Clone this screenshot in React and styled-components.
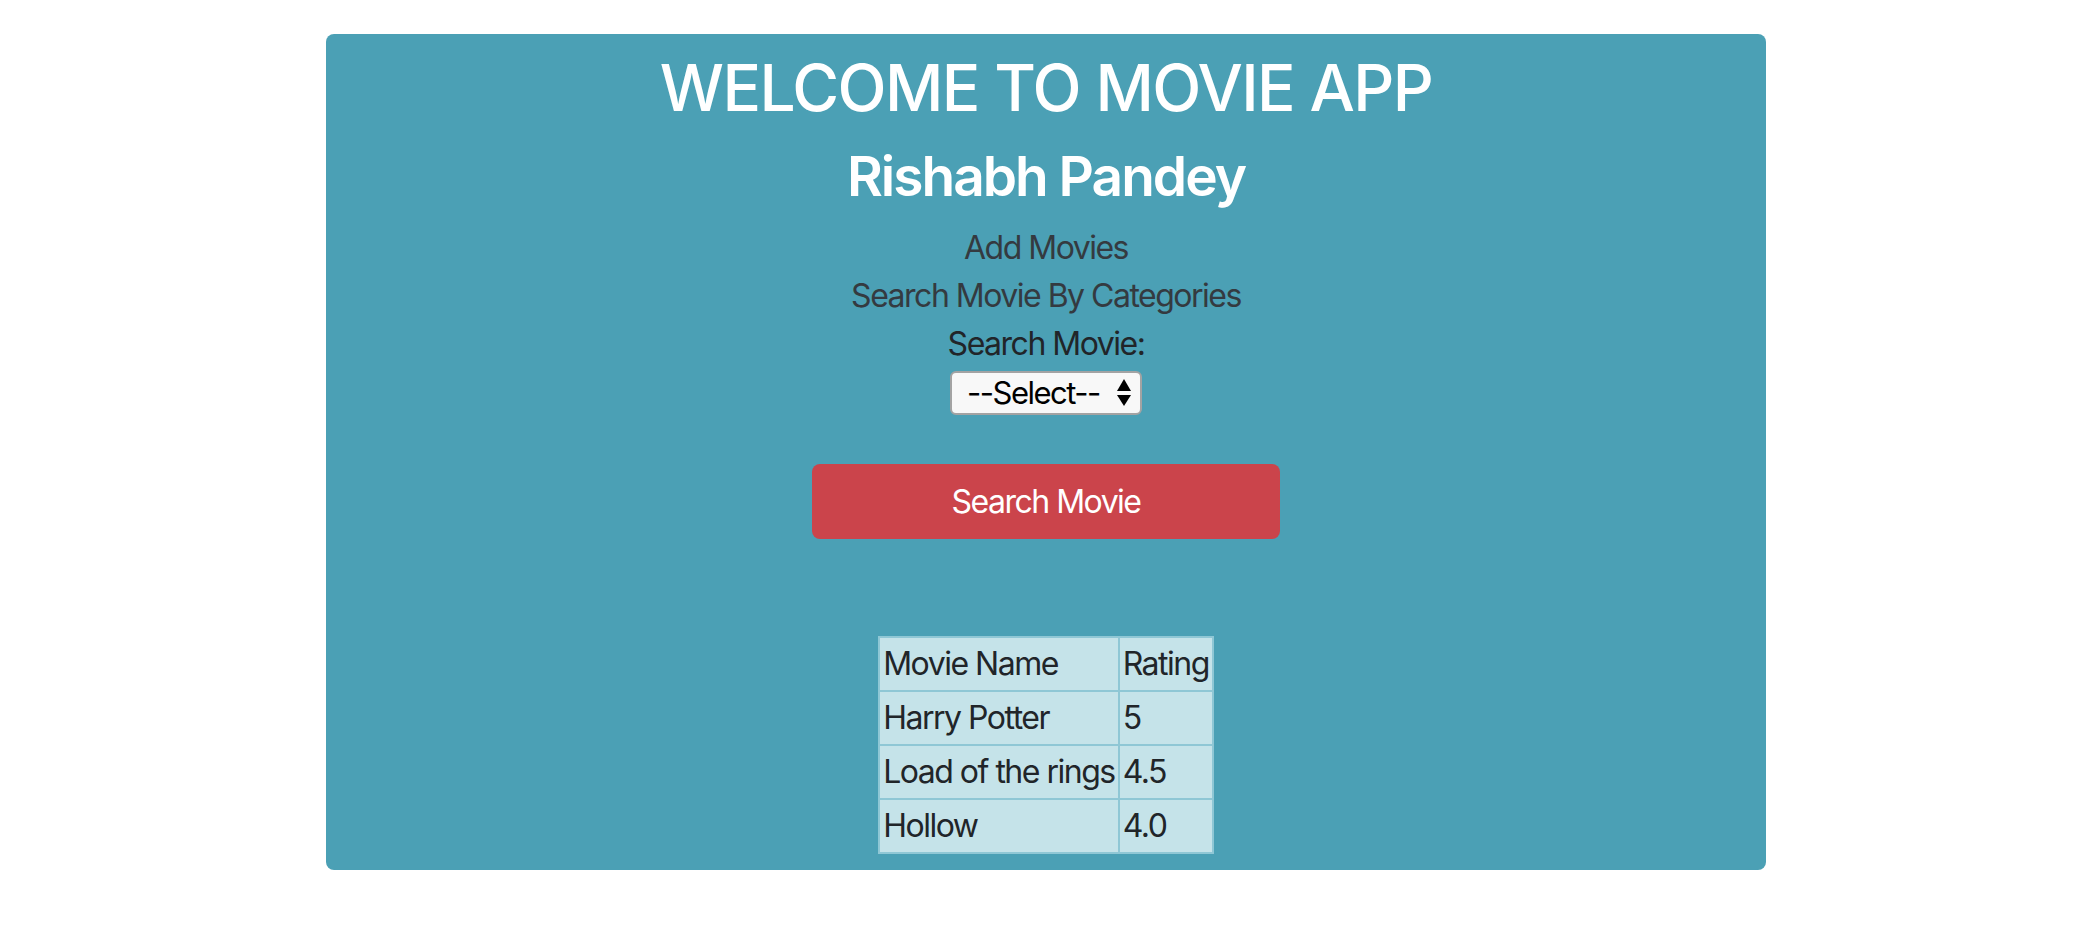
import React from 'react'
import styled, { createGlobalStyle } from 'styled-components'

const GlobalStyle = createGlobalStyle`
  body {
    margin: 0;
    background: #fff;
    font-family: Inter, 'Noto Sans', sans-serif;
    font-size: 32px;
    line-height: 1.5;
    letter-spacing: -1.5px;
    color: #212529;
  }
`

const Page = styled.div`
  padding: 34px 314px 0 326px;
`

const Card = styled.div`
  display: flex;
  flex-direction: column;
  align-items: center;
  background: #4ba0b5;
  border-radius: 8px;
  padding: 16px 0 16px;
  width: 1440px;
  box-sizing: border-box;
`

const Title = styled.h2`
  margin: 0 0 16px;
  font-size: 64px;
  font-weight: 500;
  line-height: 1.2;
  letter-spacing: -1.6px;
  color: #fff;
`

const Name = styled.h3`
  margin: 0 0 15px;
  font-size: 55px;
  font-weight: 600;
  line-height: 1.2;
  letter-spacing: -2px;
  color: #fff;
`

const NavLink = styled.a`
  display: block;
  color: ${(p) => (p.$strong ? '#212529' : '#343a40')};
  text-decoration: none;
  line-height: 48px;
`

const SelectWrap = styled.div`
  position: relative;
  margin-top: 3px;
`

const Select = styled.select`
  display: block;
  appearance: none;
  width: 192px;
  height: 44px;
  box-sizing: border-box;
  padding: 0 40px 0 15px;
  border: 2px solid #a3a3a3;
  border-radius: 6px;
  background: #f8f8f8;
  color: #000;
  font-family: Inter, 'Noto Sans', sans-serif;
  font-size: 31px;
  letter-spacing: -1.5px;
`

const Arrows = styled.svg`
  position: absolute;
  right: 8px;
  top: 8px;
  pointer-events: none;
`

const SearchButton = styled.button`
  margin-top: 49px;
  width: 468px;
  height: 75px;
  border: none;
  border-radius: 8px;
  background: #cb444b;
  color: #fff;
  font-family: Inter, 'Noto Sans', sans-serif;
  font-size: 32px;
  letter-spacing: -1.5px;
`

const Table = styled.table`
  margin-top: 97px;
  border-collapse: collapse;
  background: #c5e3e9;
`

const Cell = styled.td`
  border: 2px solid #8fc7d5;
  padding: 2px 3px;
  line-height: 48px;
  color: #212529;
  white-space: nowrap;
`

const movies = [
  ['Harry Potter', '5'],
  ['Load of the rings', '4.5'],
  ['Hollow', '4.0'],
]

export default function App() {
  return (
    <Page>
      <GlobalStyle />
      <Card>
        <Title>WELCOME TO MOVIE APP</Title>
        <Name>Rishabh Pandey</Name>
        <NavLink href="#">Add Movies</NavLink>
        <NavLink href="#">Search Movie By Categories</NavLink>
        <NavLink as="span" $strong>Search Movie:</NavLink>
        <SelectWrap>
          <Select defaultValue="">
            <option value="">--Select--</option>
          </Select>
          <Arrows width="20" height="28" viewBox="0 0 20 28">
            <path d="M10 0 L17 12 L3 12 Z" fill="#000" />
            <path d="M3 16 L17 16 L10 27 Z" fill="#000" />
          </Arrows>
        </SelectWrap>
        <SearchButton>Search Movie</SearchButton>
        <Table>
          <tbody>
            <tr>
              <Cell>Movie Name</Cell>
              <Cell>Rating</Cell>
            </tr>
            {movies.map(([name, rating]) => (
              <tr key={name}>
                <Cell>{name}</Cell>
                <Cell>{rating}</Cell>
              </tr>
            ))}
          </tbody>
        </Table>
      </Card>
    </Page>
  )
}
